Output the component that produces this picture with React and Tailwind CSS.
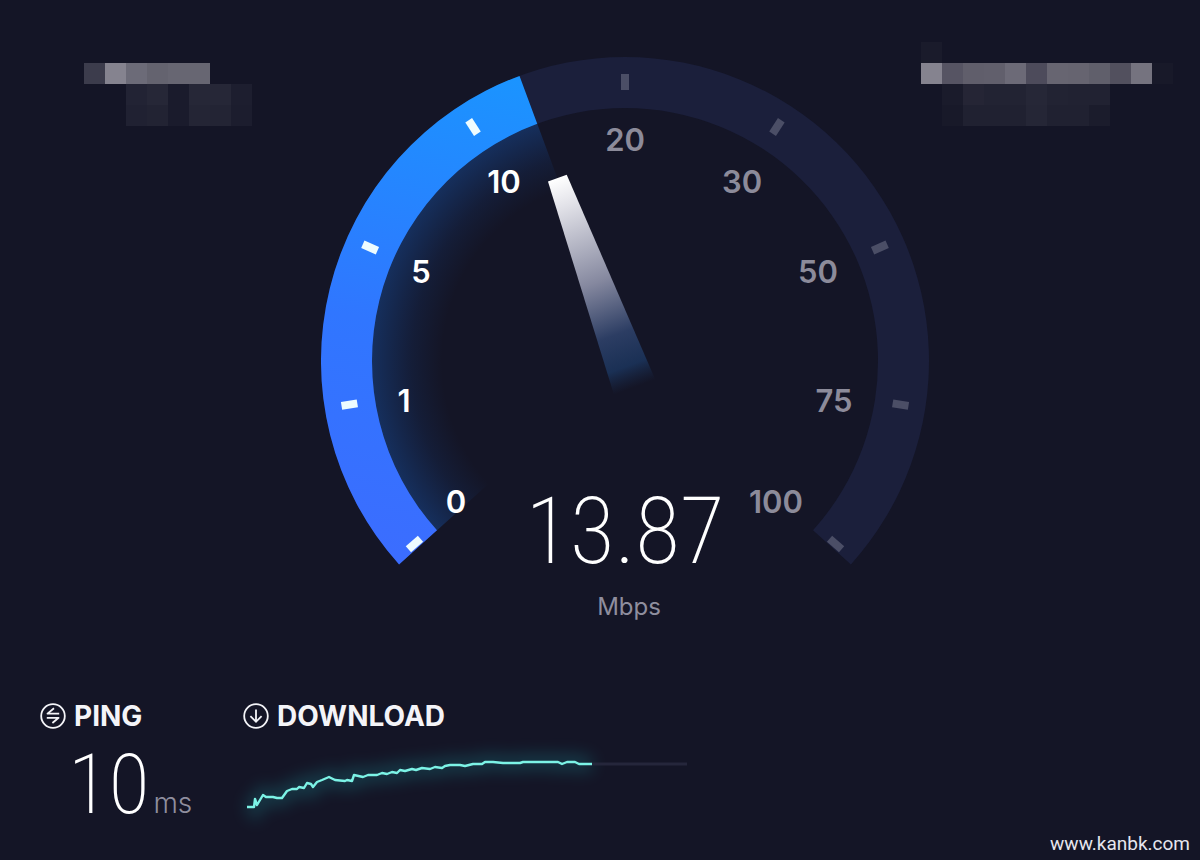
import { useId } from 'react';
import clsx from 'clsx';

const SPEED = { value: '13.87', unit: 'Mbps', angle: -20.3 };

const TICKS = [
  { label: '0', angle: -131, x: -169, y: 152 },
  { label: '1', angle: -99, x: -221, y: 51 },
  { label: '5', angle: -66, x: -204, y: -78 },
  { label: '10', angle: -33, x: -121, y: -168 },
  { label: '20', angle: 0, x: 0, y: -210 },
  { label: '30', angle: 33, x: 117, y: -168 },
  { label: '50', angle: 66, x: 193, y: -78 },
  { label: '75', angle: 99, x: 209, y: 51 },
  { label: '100', angle: 131, x: 151, y: 152 },
];

const DOWNLOAD_POINTS = [
  [0, 68], [7, 68], [8, 60], [10, 66], [16, 56], [19, 58], [26, 58], [30, 59], [35, 59], [40, 52],
  [45, 50], [50, 50], [52, 48], [57, 49], [60, 44], [64, 45], [66, 48], [70, 43], [75, 41], [82, 38],
  [88, 41], [98, 42], [100, 41], [105, 42], [107, 36], [116, 38], [121, 36], [130, 36], [135, 34],
  [140, 35], [145, 33], [150, 34], [153, 31], [158, 32], [165, 30], [169, 31], [175, 29], [183, 30],
  [188, 28], [195, 29], [198, 27], [203, 26], [213, 26], [218, 27], [226, 25], [235, 25], [238, 23],
  [246, 23], [256, 24], [273, 24], [276, 23], [311, 23], [315, 25], [320, 23], [328, 23], [332, 25],
  [345, 25],
];

// masked user and server names, one entry per cell, null is an empty cell
const USER_MASK = [
  ['#3c3c4c', '#85838f', '#6c6b78', '#64636f', '#676672', '#676672', null, null],
  [null, null, '#222334', '#262737', '#1a1b2c', '#262737', '#262737', '#1d1e2f'],
  [null, null, '#202132', '#222333', '#1a1b2c', '#242535', '#232434', '#1c1d2e'],
];

const SERVER_MASK = [
  ['#1a1b2b', null, null, null, null, null, null, null, null, null, null, null],
  ['#85838f', '#565463', '#605e6b', '#615f6c', '#6c6a77', '#4d4b5b', '#676571', '#666470', '#605f6b', '#52505e', '#75737f', '#181929'],
  [null, '#1a1b2b', '#252535', '#222333', '#222333', '#262737', '#222333', '#212232', '#212232', null, null, null],
  [null, '#181929', '#202131', '#202131', '#202131', '#252636', '#202131', '#202131', '#1b1c2c', null, null, null],
];

const polar = (radius, angle) => {
  const rad = (angle * Math.PI) / 180;
  return `${(radius * Math.sin(rad)).toFixed(2)} ${(-radius * Math.cos(rad)).toFixed(2)}`;
};

const ringPath = (outer, inner, from, to) => {
  const large = to - from > 180 ? 1 : 0;
  return `M${polar(outer, from)} A${outer} ${outer} 0 ${large} 1 ${polar(outer, to)} L${polar(inner, to)} A${inner} ${inner} 0 ${large} 0 ${polar(inner, from)} Z`;
};

const Mask = ({ rows, className }) => (
  <div className={clsx('flex flex-col', className)} aria-hidden="true">
    {rows.map((row, i) => (
      <div key={i} className="flex">
        {row.map((color, j) => (
          <div key={j} className="h-[21px] w-[21px] shrink-0" style={{ backgroundColor: color ?? undefined }} />
        ))}
      </div>
    ))}
  </div>
);

const Gauge = () => {
  const id = useId();

  return (
    <svg viewBox="-304 -304 608 508" className="w-full col-start-1 row-start-1" role="img" aria-label="Speed gauge">
      <defs>
        <linearGradient id={`${id}fill`} gradientUnits="userSpaceOnUse" x1="-200" y1="200" x2="-100" y2="-290">
          <stop offset="0" stopColor="#3b6dff" />
          <stop offset="0.45" stopColor="#3076ff" />
          <stop offset="1" stopColor="#1a95ff" />
        </linearGradient>
        <radialGradient id={`${id}glow`} gradientUnits="userSpaceOnUse" cx="0" cy="0" r="254">
          <stop offset="0.72" stopColor="#1463c8" stopOpacity="0" />
          <stop offset="0.84" stopColor="#1767d8" stopOpacity="0.1" />
          <stop offset="1" stopColor="#1a6ee0" stopOpacity="0.3" />
        </radialGradient>
        <linearGradient id={`${id}needle`} x1="0" y1="0" x2="0" y2="1">
          <stop offset="0" stopColor="#ffffff" />
          <stop offset="0.12" stopColor="#e4e4ea" />
          <stop offset="0.5" stopColor="#85889f" />
          <stop offset="0.75" stopColor="#2c3d63" />
          <stop offset="0.9" stopColor="#1b335a" stopOpacity="0.9" />
          <stop offset="1" stopColor="#182b4c" stopOpacity="0" />
        </linearGradient>
      </defs>

      <path d={ringPath(304, 253, -132, 132)} fill="#1b1f3b" />
      <path d={ringPath(254, 150, -132, SPEED.angle)} fill={`url(#${id}glow)`} />
      <path d={ringPath(304, 253, -132, SPEED.angle)} fill={`url(#${id}fill)`} />

      {TICKS.map(({ label, angle, x, y }) => {
        const active = angle <= SPEED.angle;
        return (
          <g key={label}>
            <rect
              x="-4"
              y="-287"
              width="8"
              height="16"
              transform={`rotate(${angle})`}
              className={active ? 'fill-[#eefcff]' : 'fill-[#4b4e66]'}
            />
            <text
              x={x}
              y={y}
              textAnchor="middle"
              className={clsx('text-[31px] font-semibold', active ? 'fill-white' : 'fill-[#8c8b9a]')}
            >
              {label}
            </text>
          </g>
        );
      })}

      <polygon points="-10,-195 10,-195 22,28 -22,28" fill={`url(#${id}needle)`} transform={`rotate(${SPEED.angle})`} />
    </svg>
  );
};

const PingIcon = () => (
  <svg viewBox="0 0 26 26" className="size-[26px]" fill="none" stroke="currentColor" strokeWidth="1.8" aria-hidden="true">
    <circle cx="13" cy="13" r="11.8" />
    <path d="M14 5.2 7.5 10.6H19.2M6.8 14.8H18.6L12.4 20" strokeLinejoin="round" />
  </svg>
);

const DownloadIcon = () => (
  <svg viewBox="0 0 26 26" className="size-[26px]" fill="none" stroke="currentColor" strokeWidth="1.8" aria-hidden="true">
    <circle cx="13" cy="13" r="11.8" />
    <path d="M13 6.5V18.5M7.4 13.2 13 18.8 18.6 13.2" />
  </svg>
);

const StatTitle = ({ icon: Icon, children }) => (
  <h2 className="flex items-center gap-2 h-[26px] text-[28px] leading-none font-bold text-[#f4f4f8]">
    <Icon />
    {children}
  </h2>
);

const Sparkline = ({ points }) => {
  const line = points.map((p) => p.join(',')).join(' ');

  return (
    <svg viewBox="0 0 440 80" className="w-full max-w-[440px] overflow-visible" fill="none" role="img" aria-label="Download speed over time">
      <polyline points={line} stroke="#1fa3a8" strokeWidth="16" className="opacity-25 blur-[8px]" />
      <path d="M345 25H440" stroke="#25263b" strokeWidth="3" />
      <polyline points={line} stroke="#7cf3e6" strokeWidth="2.4" strokeLinejoin="round" />
    </svg>
  );
};

const App = () => {
  return (
    <div className="min-h-screen flex flex-col bg-[#141526] font-['Inter',sans-serif] text-white">
      <main className="flex-1">
        <section className="grid grid-cols-[minmax(0,1fr)_minmax(0,608px)_minmax(0,1fr)] pt-[57px] pl-21 pr-[34px]">
          <Mask rows={USER_MASK} className="mt-1.5" />
          <div>
            <div className="grid">
              <Gauge />
              <p className="col-start-1 row-start-1 self-end text-center text-[92px] leading-[66px] font-['Roboto_Condensed','Roboto',sans-serif] font-extralight">
                {SPEED.value}
              </p>
            </div>
            <p className="mt-[26px] pl-2 text-center text-2xl text-[#8f8e9e]">{SPEED.unit}</p>
          </div>
          <Mask rows={SERVER_MASK} className="-ml-2 -mt-[15px]" />
        </section>

        <section className="mt-20 px-10 grid grid-cols-[203px_1fr]">
          <div>
            <StatTitle icon={PingIcon}>PING</StatTitle>
            <p className="mt-5 pl-7 flex items-baseline gap-1">
              <span className="text-[84px] leading-[72px] font-['Roboto_Condensed','Roboto',sans-serif] font-extralight">10</span>
              <span className="text-[28px] font-light text-[#8f8e9e]">ms</span>
            </p>
          </div>
          <div>
            <StatTitle icon={DownloadIcon}>DOWNLOAD</StatTitle>
            <div className="mt-2.5 pl-1">
              <Sparkline points={DOWNLOAD_POINTS} />
            </div>
          </div>
        </section>
      </main>

      <footer className="px-2.5 pb-1 text-right">
        <a href="#" className="text-[19px] leading-6 font-['Roboto',sans-serif] text-[#e6e6ee]">
          www.kanbk.com
        </a>
      </footer>
    </div>
  );
};

export default App;
